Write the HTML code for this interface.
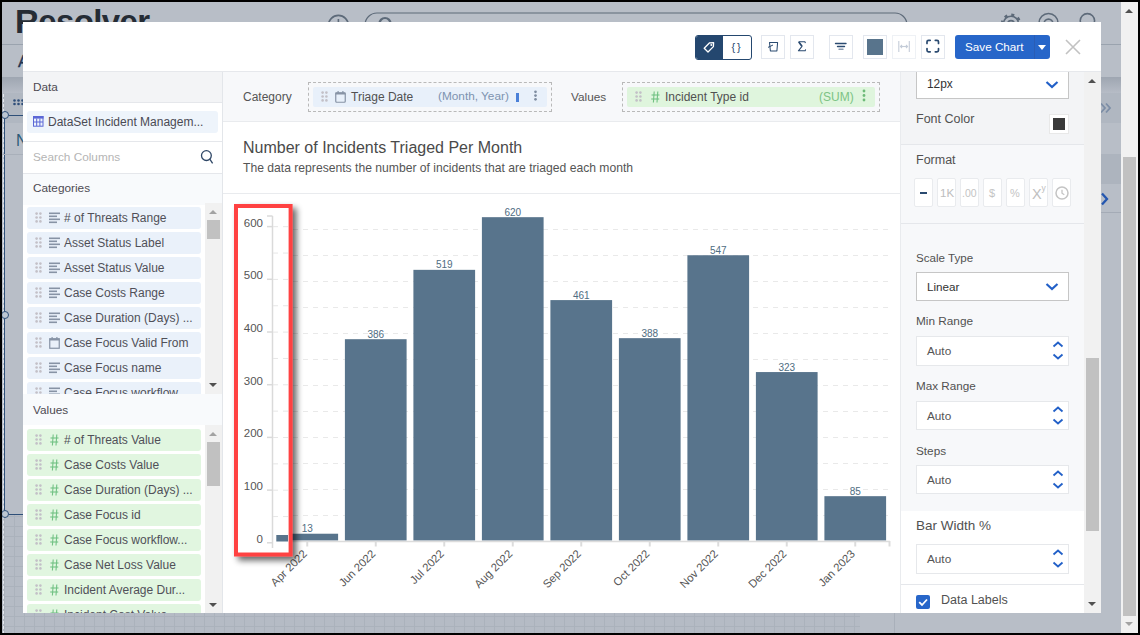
<!DOCTYPE html>
<html><head><meta charset="utf-8">
<style>
*{box-sizing:border-box;margin:0;padding:0}
html,body{width:1140px;height:635px;overflow:hidden;background:#000;font-family:"Liberation Sans",sans-serif;color:#4a4a4a}
body{position:relative}
.a{position:absolute}
.t{position:absolute;white-space:nowrap;line-height:1}
.it{position:absolute;left:27px;width:174px;height:22px;border-radius:3px;background:#eaf1fa}
.it .t{left:37px;top:5px;font-size:12px;color:#505058}
.vi{background:#e1f6e0}
.dots{position:absolute;left:8px;top:6px;width:7px;height:11px;
 background-image:radial-gradient(circle,#c2c2c2 1.3px,transparent 1.5px);background-size:4px 4px;background-position:-0.5px -0.5px}
.sb{position:absolute;background:#f1f1f1}
.thumb{position:absolute;background:#c1c1c1}
.arr-up{position:absolute;width:0;height:0;border-left:4px solid transparent;border-right:4px solid transparent;border-bottom:4px solid #a3a3a3}
.arr-dn{position:absolute;width:0;height:0;border-left:4px solid transparent;border-right:4px solid transparent;border-top:4px solid #505050}
.tb{position:absolute;top:35px;width:24px;height:24px;border:1px solid #e3e7ee;background:#fff}
</style></head><body>
<!-- page background -->
<div class="a" style="left:2px;top:2px;width:1136px;height:631px;background:#b8bec7;overflow:hidden">
 <div class="a" style="left:0;top:512px;width:858px;height:120px;background-color:#b5bbc5;background-image:linear-gradient(to right,#abb2bc 1px,transparent 1px),linear-gradient(to bottom,#abb2bc 1px,transparent 1px);background-size:10px 10px;background-position:2px 2px"></div>
 <div class="a" style="left:892px;top:600px;width:1px;height:32px;background:#a9b0ba"></div>
 <div class="a" style="left:0;top:42px;width:1136px;height:1px;background:#9aa3ae"></div>
 <div class="a" style="left:0;top:75px;width:1136px;height:16px;background:linear-gradient(#9ea6b1,#b6bcc6)"></div>
 <div class="a" style="left:0;top:91px;width:1136px;height:30px;background:#b0b7c1"></div>
 <div class="a" style="left:1099px;top:152px;width:20px;height:30px;background:#adb4be"></div>
 <div class="a" style="left:1099px;top:210px;width:20px;height:1px;background:#a4abb6"></div>
 <div class="t" style="left:13px;top:2.5px;font-size:33px;font-weight:bold;color:#252c35;letter-spacing:-0.6px">Resolver</div>
 <div class="t" style="left:16px;top:51px;font-size:17px;color:#1f3552;-webkit-text-stroke:0.4px #1f3552">A</div>
 <svg class="a" style="left:10px;top:96px" width="14" height="10" viewBox="0 0 14 10"><g fill="#2f4f7a"><circle cx="2.5" cy="2.5" r="1.3"/><circle cx="6.5" cy="2.5" r="1.3"/><circle cx="10.5" cy="2.5" r="1.3"/><circle cx="2.5" cy="6" r="1.3"/><circle cx="6.5" cy="6" r="1.3"/><circle cx="10.5" cy="6" r="1.3"/></g></svg>
 <div class="a" style="left:1px;top:92px;width:0;height:540px;border-left:1px dashed #e6e9ee"></div>
 <div class="a" style="left:1.5px;top:113px;width:1.5px;height:399px;background:#2e4f78"></div>
 <div class="a" style="left:7px;top:112.5px;width:16px;height:1.2px;background:#2e4f78"></div>
 <div class="a" style="left:7px;top:511.5px;width:16px;height:1.2px;background:#2e4f78"></div>
 <div class="a" style="left:-1px;top:109px;width:8px;height:8px;border:1.2px solid #2e4f78;border-radius:50%;background:#bcc6d1"></div>
 <div class="a" style="left:-1px;top:309px;width:8px;height:8px;border:1.2px solid #2e4f78;border-radius:50%;background:#bcc6d1"></div>
 <div class="a" style="left:-1px;top:508px;width:8px;height:8px;border:1.2px solid #2e4f78;border-radius:50%;background:#bcc6d1"></div>
 <div class="t" style="left:14px;top:131px;font-size:16px;color:#2b5a78">N</div>
 <div class="a" style="left:0;top:152px;width:21px;height:1px;background:#a9b0ba"></div>
 <svg class="a" style="left:1097px;top:99px" width="14" height="14" viewBox="0 0 14 14"><path d="M2 2.5 L6 7 L2 11.5 M7 2.5 L11 7 L7 11.5" fill="none" stroke="#7d8ea6" stroke-width="1.8"/></svg>
 <svg class="a" style="left:1097px;top:189px" width="12" height="16" viewBox="0 0 12 16"><path d="M3 2.5 L8 8 L3 13.5" fill="none" stroke="#2457b0" stroke-width="2.3"/></svg>
 <svg class="a" style="left:320px;top:8px" width="800" height="20" viewBox="0 0 800 20"><g fill="none" stroke="#5d6a79" stroke-width="1.6"><circle cx="16.4" cy="15.4" r="10"/><line x1="16.4" y1="9" x2="16.4" y2="16"/><rect x="43" y="3" width="542" height="30" rx="12" stroke-width="1.2"/><circle cx="63" cy="13.5" r="5.5" stroke-width="2.2"/><circle cx="689" cy="13.8" r="7.6"/><circle cx="689" cy="13.8" r="9" stroke-width="2.4" stroke-dasharray="3 4.07"/><circle cx="689" cy="13.8" r="3.2"/><circle cx="726.5" cy="13" r="9.5"/><circle cx="726.5" cy="13.5" r="4.4"/><circle cx="765.4" cy="10.8" r="7.2"/></g><g fill="#5d6a79"><circle cx="553" cy="15.5" r="2.3"/><circle cx="561" cy="15.5" r="2.3"/><circle cx="569" cy="15.5" r="2.3"/></g></svg>
</div>

<!-- page scrollbar -->
<div class="sb" style="left:1121px;top:2px;width:17px;height:631px"></div>
<div class="thumb" style="left:1123px;top:157px;width:13px;height:459px"></div>
<div class="arr-up" style="left:1125px;top:9px;border-bottom-color:#505050"></div>
<div class="arr-dn" style="left:1125px;top:622px;border-top-color:#a3a3a3"></div>

<!-- modal -->
<div class="a" style="left:23px;top:22px;width:1078px;height:591px;background:#fff"></div>
<div class="a" style="left:23px;top:71px;width:1078px;height:1px;background:#e6e8ec"></div>

<!-- HEADER TOOLBAR -->
<div class="a" style="left:695px;top:35px;width:57px;height:25px;border:1.3px solid #24476f;border-radius:3px;background:#fff;overflow:hidden">
 <div class="a" style="left:0;top:0;width:27px;height:25px;background:#24476f"></div>
</div>
<svg class="a" style="left:702px;top:40px" width="14" height="14" viewBox="0 0 14 14"><path d="M2.2 8.2 L7.6 2.8 L11.6 2.6 L11.4 6.6 L6 12 Z" fill="none" stroke="#fff" stroke-width="1.3" stroke-linejoin="round"/><circle cx="9.3" cy="4.9" r="1" fill="#fff"/></svg>
<div class="t" style="left:731.5px;top:42px;font-size:11px;color:#2a4a70;letter-spacing:-0.6px">{ }</div>
<div class="tb" style="left:761px;width:24px"></div>
<svg class="a" style="left:766px;top:40px" width="14" height="14" viewBox="0 0 14 14"><path d="M3.5 2.5 H11.6 L10.9 11 H4.4 Z" fill="none" stroke="#2a4a70" stroke-width="1.05" stroke-linejoin="round"/><path d="M2 7.4 L7 5" stroke="#2a4a70" stroke-width="1"/></svg>
<div class="tb" style="left:790px;width:24px"></div>
<svg class="a" style="left:795px;top:40px" width="14" height="14" viewBox="0 0 14 14"><path d="M3.6 1.8 H10 L10.4 3.2 M3.6 1.8 L7 6.3 L3.4 10.8 H10.2 L10.6 9.4" fill="none" stroke="#2a4a70" stroke-width="1.05" stroke-linejoin="round"/><path d="M3.8 2 L7 6.3" stroke="#2a4a70" stroke-width="1.6"/></svg>
<div class="tb" style="left:829px;width:24px"></div>
<svg class="a" style="left:834px;top:40px" width="14" height="14" viewBox="0 0 14 14"><g stroke-linecap="round" stroke-width="1.4"><line x1="1.5" y1="3.5" x2="12" y2="3.5" stroke="#2a4a70"/><line x1="3.5" y1="6.5" x2="10.5" y2="6.5" stroke="#2a4a70"/><line x1="5" y1="9.3" x2="9" y2="9.3" stroke="#8a9ab0"/></g></svg>
<div class="tb" style="left:863px;width:24px"></div>
<div class="a" style="left:867px;top:39px;width:16px;height:16px;background:#58748c"></div>
<div class="tb" style="left:892px;width:24px;border-color:#eef1f5"></div>
<svg class="a" style="left:897px;top:40px" width="14" height="14" viewBox="0 0 14 14"><g stroke="#c4ccd8" stroke-width="1.1" fill="none"><line x1="1.8" y1="1" x2="1.8" y2="12"/><line x1="12.3" y1="1" x2="12.3" y2="12"/><line x1="3.5" y1="6.5" x2="10.5" y2="6.5"/><path d="M5 5 L3.5 6.5 L5 8 M9 5 L10.5 6.5 L9 8"/></g></svg>
<div class="tb" style="left:921px;width:24px"></div>
<svg class="a" style="left:926px;top:39px" width="14" height="15" viewBox="0 0 14 15"><g stroke="#2a4a70" stroke-width="1.7" fill="none" stroke-linecap="round"><path d="M1 4.5 V2.8 Q1 1.3 2.5 1.3 H4.2"/><path d="M9.3 1.3 H11 Q12.5 1.3 12.5 2.8 V4.5"/><path d="M12.5 9.5 V11.3 Q12.5 12.8 11 12.8 H9.3"/><path d="M4.2 12.8 H2.5 Q1 12.8 1 11.3 V9.5"/></g></svg>
<div class="a" style="left:955px;top:35px;width:95px;height:24px;background:#2766c9;border-radius:3px"></div>
<div class="a" style="left:1034px;top:35px;width:1px;height:24px;background:#2a5db5"></div>
<div class="t" style="left:965px;top:41.3px;font-size:11.7px;color:#fff">Save Chart</div>
<div class="a" style="left:1038px;top:45px;width:0;height:0;border-left:4px solid transparent;border-right:4px solid transparent;border-top:5px solid #fff"></div>
<svg class="a" style="left:1064px;top:38px" width="18" height="18" viewBox="0 0 18 18"><path d="M2 2 L16 16 M16 2 L2 16" stroke="#c2c2c2" stroke-width="1.6"/></svg>
<!-- LEFT PANEL -->
<div id="left">
<div class="a" style="left:23px;top:72px;width:199px;height:31px;background:#f3f4f6;border-bottom:1px solid #e5e7eb"></div>
<div class="t" style="left:33px;top:81.59px;font-size:11.8px;color:#4d4a52">Data</div>
<div class="a" style="left:23px;top:141px;width:199px;height:1px;background:#e5e7eb"></div>
<div class="a" style="left:27px;top:111px;width:191px;height:22px;background:#eef4fb;border-radius:3px"></div>
<div class="t" style="left:48px;top:116px;font-size:12px;color:#4a4a54">DataSet Incident Managem...</div>
<svg class="a" style="left:33px;top:116px" width="11" height="11" viewBox="0 0 11 11"><g fill="none" stroke="#5b67d6" stroke-width="1"><rect x="0.5" y="0.5" width="9.5" height="9.7"/><line x1="0.5" y1="6" x2="10" y2="6"/><line x1="3.7" y1="2.5" x2="3.7" y2="10"/><line x1="6.9" y1="2.5" x2="6.9" y2="10"/></g><rect x="0" y="0" width="10.5" height="2.6" fill="#5b67d6"/></svg>
<svg class="a" style="left:199px;top:148px" width="16" height="17" viewBox="0 0 16 17"><circle cx="7.4" cy="7.6" r="4.9" fill="none" stroke="#2f4766" stroke-width="1.3"/><line x1="10.8" y1="11.2" x2="13.6" y2="15.3" stroke="#2f4766" stroke-width="1.3"/></svg>

<div class="a" style="left:23px;top:173px;width:199px;height:1px;background:#e5e7eb"></div>
<div class="t" style="left:33px;top:151.59px;font-size:11.8px;color:#b5b5b5">Search Columns</div>
<div class="a" style="left:23px;top:174px;width:199px;height:31px;background:#f8fafc"></div>
<div class="t" style="left:33px;top:182.59px;font-size:11.8px;color:#4d4a52">Categories</div>
<div class="a" style="left:23px;top:394px;width:199px;height:31px;background:#f8fafc"></div>
<div class="t" style="left:33px;top:404.59px;font-size:11.8px;color:#4d4a52">Values</div>
<div class="a" style="left:23px;top:205px;width:182px;height:189px;overflow:hidden">
<div class="it" style="left:4px;top:2px"><svg class="a" style="left:8px;top:5px" width="8" height="12" viewBox="0 0 8 12"><g fill="#c3c0c7"><circle cx="1.6" cy="1.6" r="1.3"/><circle cx="5.4" cy="1.6" r="1.3"/><circle cx="1.6" cy="5.5" r="1.3"/><circle cx="5.4" cy="5.5" r="1.3"/><circle cx="1.6" cy="9.4" r="1.3"/><circle cx="5.4" cy="9.4" r="1.3"/></g></svg><svg class="a" style="left:22px;top:5px" width="11" height="12" viewBox="0 0 11 12"><g fill="#8793a5"><rect x="0" y="0.5" width="11" height="1.6"/><rect x="0" y="3.5" width="8" height="1.6"/><rect x="0" y="6.5" width="11" height="1.6"/><rect x="0" y="9.5" width="8" height="1.6"/></g></svg><div class="t"># of Threats Range</div></div>
<div class="it" style="left:4px;top:27px"><svg class="a" style="left:8px;top:5px" width="8" height="12" viewBox="0 0 8 12"><g fill="#c3c0c7"><circle cx="1.6" cy="1.6" r="1.3"/><circle cx="5.4" cy="1.6" r="1.3"/><circle cx="1.6" cy="5.5" r="1.3"/><circle cx="5.4" cy="5.5" r="1.3"/><circle cx="1.6" cy="9.4" r="1.3"/><circle cx="5.4" cy="9.4" r="1.3"/></g></svg><svg class="a" style="left:22px;top:5px" width="11" height="12" viewBox="0 0 11 12"><g fill="#8793a5"><rect x="0" y="0.5" width="11" height="1.6"/><rect x="0" y="3.5" width="8" height="1.6"/><rect x="0" y="6.5" width="11" height="1.6"/><rect x="0" y="9.5" width="8" height="1.6"/></g></svg><div class="t">Asset Status Label</div></div>
<div class="it" style="left:4px;top:52px"><svg class="a" style="left:8px;top:5px" width="8" height="12" viewBox="0 0 8 12"><g fill="#c3c0c7"><circle cx="1.6" cy="1.6" r="1.3"/><circle cx="5.4" cy="1.6" r="1.3"/><circle cx="1.6" cy="5.5" r="1.3"/><circle cx="5.4" cy="5.5" r="1.3"/><circle cx="1.6" cy="9.4" r="1.3"/><circle cx="5.4" cy="9.4" r="1.3"/></g></svg><svg class="a" style="left:22px;top:5px" width="11" height="12" viewBox="0 0 11 12"><g fill="#8793a5"><rect x="0" y="0.5" width="11" height="1.6"/><rect x="0" y="3.5" width="8" height="1.6"/><rect x="0" y="6.5" width="11" height="1.6"/><rect x="0" y="9.5" width="8" height="1.6"/></g></svg><div class="t">Asset Status Value</div></div>
<div class="it" style="left:4px;top:77px"><svg class="a" style="left:8px;top:5px" width="8" height="12" viewBox="0 0 8 12"><g fill="#c3c0c7"><circle cx="1.6" cy="1.6" r="1.3"/><circle cx="5.4" cy="1.6" r="1.3"/><circle cx="1.6" cy="5.5" r="1.3"/><circle cx="5.4" cy="5.5" r="1.3"/><circle cx="1.6" cy="9.4" r="1.3"/><circle cx="5.4" cy="9.4" r="1.3"/></g></svg><svg class="a" style="left:22px;top:5px" width="11" height="12" viewBox="0 0 11 12"><g fill="#8793a5"><rect x="0" y="0.5" width="11" height="1.6"/><rect x="0" y="3.5" width="8" height="1.6"/><rect x="0" y="6.5" width="11" height="1.6"/><rect x="0" y="9.5" width="8" height="1.6"/></g></svg><div class="t">Case Costs Range</div></div>
<div class="it" style="left:4px;top:102px"><svg class="a" style="left:8px;top:5px" width="8" height="12" viewBox="0 0 8 12"><g fill="#c3c0c7"><circle cx="1.6" cy="1.6" r="1.3"/><circle cx="5.4" cy="1.6" r="1.3"/><circle cx="1.6" cy="5.5" r="1.3"/><circle cx="5.4" cy="5.5" r="1.3"/><circle cx="1.6" cy="9.4" r="1.3"/><circle cx="5.4" cy="9.4" r="1.3"/></g></svg><svg class="a" style="left:22px;top:5px" width="11" height="12" viewBox="0 0 11 12"><g fill="#8793a5"><rect x="0" y="0.5" width="11" height="1.6"/><rect x="0" y="3.5" width="8" height="1.6"/><rect x="0" y="6.5" width="11" height="1.6"/><rect x="0" y="9.5" width="8" height="1.6"/></g></svg><div class="t">Case Duration (Days) ...</div></div>
<div class="it" style="left:4px;top:127px"><svg class="a" style="left:8px;top:5px" width="8" height="12" viewBox="0 0 8 12"><g fill="#c3c0c7"><circle cx="1.6" cy="1.6" r="1.3"/><circle cx="5.4" cy="1.6" r="1.3"/><circle cx="1.6" cy="5.5" r="1.3"/><circle cx="5.4" cy="5.5" r="1.3"/><circle cx="1.6" cy="9.4" r="1.3"/><circle cx="5.4" cy="9.4" r="1.3"/></g></svg><svg class="a" style="left:22px;top:5px" width="11" height="12" viewBox="0 0 11 12"><rect x="0.75" y="1.75" width="9.5" height="9.5" fill="none" stroke="#8793a5" stroke-width="1.2"/><rect x="0.5" y="1.5" width="10" height="2" fill="#8793a5"/><rect x="2.5" y="0" width="1.2" height="2.5" fill="#8793a5"/><rect x="7.3" y="0" width="1.2" height="2.5" fill="#8793a5"/></svg><div class="t">Case Focus Valid From</div></div>
<div class="it" style="left:4px;top:152px"><svg class="a" style="left:8px;top:5px" width="8" height="12" viewBox="0 0 8 12"><g fill="#c3c0c7"><circle cx="1.6" cy="1.6" r="1.3"/><circle cx="5.4" cy="1.6" r="1.3"/><circle cx="1.6" cy="5.5" r="1.3"/><circle cx="5.4" cy="5.5" r="1.3"/><circle cx="1.6" cy="9.4" r="1.3"/><circle cx="5.4" cy="9.4" r="1.3"/></g></svg><svg class="a" style="left:22px;top:5px" width="11" height="12" viewBox="0 0 11 12"><g fill="#8793a5"><rect x="0" y="0.5" width="11" height="1.6"/><rect x="0" y="3.5" width="8" height="1.6"/><rect x="0" y="6.5" width="11" height="1.6"/><rect x="0" y="9.5" width="8" height="1.6"/></g></svg><div class="t">Case Focus name</div></div>
<div class="it" style="left:4px;top:177px"><svg class="a" style="left:8px;top:5px" width="8" height="12" viewBox="0 0 8 12"><g fill="#c3c0c7"><circle cx="1.6" cy="1.6" r="1.3"/><circle cx="5.4" cy="1.6" r="1.3"/><circle cx="1.6" cy="5.5" r="1.3"/><circle cx="5.4" cy="5.5" r="1.3"/><circle cx="1.6" cy="9.4" r="1.3"/><circle cx="5.4" cy="9.4" r="1.3"/></g></svg><svg class="a" style="left:22px;top:5px" width="11" height="12" viewBox="0 0 11 12"><g fill="#8793a5"><rect x="0" y="0.5" width="11" height="1.6"/><rect x="0" y="3.5" width="8" height="1.6"/><rect x="0" y="6.5" width="11" height="1.6"/><rect x="0" y="9.5" width="8" height="1.6"/></g></svg><div class="t">Case Focus workflow...</div></div>
</div>
<div class="a" style="left:23px;top:425px;width:182px;height:188px;overflow:hidden">
<div class="it vi" style="left:4px;top:4px"><svg class="a" style="left:8px;top:5px" width="8" height="12" viewBox="0 0 8 12"><g fill="#c3c0c7"><circle cx="1.6" cy="1.6" r="1.3"/><circle cx="5.4" cy="1.6" r="1.3"/><circle cx="1.6" cy="5.5" r="1.3"/><circle cx="5.4" cy="5.5" r="1.3"/><circle cx="1.6" cy="9.4" r="1.3"/><circle cx="5.4" cy="9.4" r="1.3"/></g></svg><svg class="a" style="left:23px;top:5px" width="9" height="12" viewBox="0 0 9 12"><g stroke="#72c283" stroke-width="1.1" fill="none"><line x1="3.2" y1="0.5" x2="2.4" y2="11.5"/><line x1="6.8" y1="0.5" x2="6" y2="11.5"/><line x1="0.5" y1="4" x2="8.5" y2="4"/><line x1="0.2" y1="8" x2="8.2" y2="8"/></g></svg><div class="t"># of Threats Value</div></div>
<div class="it vi" style="left:4px;top:29px"><svg class="a" style="left:8px;top:5px" width="8" height="12" viewBox="0 0 8 12"><g fill="#c3c0c7"><circle cx="1.6" cy="1.6" r="1.3"/><circle cx="5.4" cy="1.6" r="1.3"/><circle cx="1.6" cy="5.5" r="1.3"/><circle cx="5.4" cy="5.5" r="1.3"/><circle cx="1.6" cy="9.4" r="1.3"/><circle cx="5.4" cy="9.4" r="1.3"/></g></svg><svg class="a" style="left:23px;top:5px" width="9" height="12" viewBox="0 0 9 12"><g stroke="#72c283" stroke-width="1.1" fill="none"><line x1="3.2" y1="0.5" x2="2.4" y2="11.5"/><line x1="6.8" y1="0.5" x2="6" y2="11.5"/><line x1="0.5" y1="4" x2="8.5" y2="4"/><line x1="0.2" y1="8" x2="8.2" y2="8"/></g></svg><div class="t">Case Costs Value</div></div>
<div class="it vi" style="left:4px;top:54px"><svg class="a" style="left:8px;top:5px" width="8" height="12" viewBox="0 0 8 12"><g fill="#c3c0c7"><circle cx="1.6" cy="1.6" r="1.3"/><circle cx="5.4" cy="1.6" r="1.3"/><circle cx="1.6" cy="5.5" r="1.3"/><circle cx="5.4" cy="5.5" r="1.3"/><circle cx="1.6" cy="9.4" r="1.3"/><circle cx="5.4" cy="9.4" r="1.3"/></g></svg><svg class="a" style="left:23px;top:5px" width="9" height="12" viewBox="0 0 9 12"><g stroke="#72c283" stroke-width="1.1" fill="none"><line x1="3.2" y1="0.5" x2="2.4" y2="11.5"/><line x1="6.8" y1="0.5" x2="6" y2="11.5"/><line x1="0.5" y1="4" x2="8.5" y2="4"/><line x1="0.2" y1="8" x2="8.2" y2="8"/></g></svg><div class="t">Case Duration (Days) ...</div></div>
<div class="it vi" style="left:4px;top:79px"><svg class="a" style="left:8px;top:5px" width="8" height="12" viewBox="0 0 8 12"><g fill="#c3c0c7"><circle cx="1.6" cy="1.6" r="1.3"/><circle cx="5.4" cy="1.6" r="1.3"/><circle cx="1.6" cy="5.5" r="1.3"/><circle cx="5.4" cy="5.5" r="1.3"/><circle cx="1.6" cy="9.4" r="1.3"/><circle cx="5.4" cy="9.4" r="1.3"/></g></svg><svg class="a" style="left:23px;top:5px" width="9" height="12" viewBox="0 0 9 12"><g stroke="#72c283" stroke-width="1.1" fill="none"><line x1="3.2" y1="0.5" x2="2.4" y2="11.5"/><line x1="6.8" y1="0.5" x2="6" y2="11.5"/><line x1="0.5" y1="4" x2="8.5" y2="4"/><line x1="0.2" y1="8" x2="8.2" y2="8"/></g></svg><div class="t">Case Focus id</div></div>
<div class="it vi" style="left:4px;top:104px"><svg class="a" style="left:8px;top:5px" width="8" height="12" viewBox="0 0 8 12"><g fill="#c3c0c7"><circle cx="1.6" cy="1.6" r="1.3"/><circle cx="5.4" cy="1.6" r="1.3"/><circle cx="1.6" cy="5.5" r="1.3"/><circle cx="5.4" cy="5.5" r="1.3"/><circle cx="1.6" cy="9.4" r="1.3"/><circle cx="5.4" cy="9.4" r="1.3"/></g></svg><svg class="a" style="left:23px;top:5px" width="9" height="12" viewBox="0 0 9 12"><g stroke="#72c283" stroke-width="1.1" fill="none"><line x1="3.2" y1="0.5" x2="2.4" y2="11.5"/><line x1="6.8" y1="0.5" x2="6" y2="11.5"/><line x1="0.5" y1="4" x2="8.5" y2="4"/><line x1="0.2" y1="8" x2="8.2" y2="8"/></g></svg><div class="t">Case Focus workflow...</div></div>
<div class="it vi" style="left:4px;top:129px"><svg class="a" style="left:8px;top:5px" width="8" height="12" viewBox="0 0 8 12"><g fill="#c3c0c7"><circle cx="1.6" cy="1.6" r="1.3"/><circle cx="5.4" cy="1.6" r="1.3"/><circle cx="1.6" cy="5.5" r="1.3"/><circle cx="5.4" cy="5.5" r="1.3"/><circle cx="1.6" cy="9.4" r="1.3"/><circle cx="5.4" cy="9.4" r="1.3"/></g></svg><svg class="a" style="left:23px;top:5px" width="9" height="12" viewBox="0 0 9 12"><g stroke="#72c283" stroke-width="1.1" fill="none"><line x1="3.2" y1="0.5" x2="2.4" y2="11.5"/><line x1="6.8" y1="0.5" x2="6" y2="11.5"/><line x1="0.5" y1="4" x2="8.5" y2="4"/><line x1="0.2" y1="8" x2="8.2" y2="8"/></g></svg><div class="t">Case Net Loss Value</div></div>
<div class="it vi" style="left:4px;top:154px"><svg class="a" style="left:8px;top:5px" width="8" height="12" viewBox="0 0 8 12"><g fill="#c3c0c7"><circle cx="1.6" cy="1.6" r="1.3"/><circle cx="5.4" cy="1.6" r="1.3"/><circle cx="1.6" cy="5.5" r="1.3"/><circle cx="5.4" cy="5.5" r="1.3"/><circle cx="1.6" cy="9.4" r="1.3"/><circle cx="5.4" cy="9.4" r="1.3"/></g></svg><svg class="a" style="left:23px;top:5px" width="9" height="12" viewBox="0 0 9 12"><g stroke="#72c283" stroke-width="1.1" fill="none"><line x1="3.2" y1="0.5" x2="2.4" y2="11.5"/><line x1="6.8" y1="0.5" x2="6" y2="11.5"/><line x1="0.5" y1="4" x2="8.5" y2="4"/><line x1="0.2" y1="8" x2="8.2" y2="8"/></g></svg><div class="t">Incident Average Dur...</div></div>
<div class="it vi" style="left:4px;top:179px"><svg class="a" style="left:8px;top:5px" width="8" height="12" viewBox="0 0 8 12"><g fill="#c3c0c7"><circle cx="1.6" cy="1.6" r="1.3"/><circle cx="5.4" cy="1.6" r="1.3"/><circle cx="1.6" cy="5.5" r="1.3"/><circle cx="5.4" cy="5.5" r="1.3"/><circle cx="1.6" cy="9.4" r="1.3"/><circle cx="5.4" cy="9.4" r="1.3"/></g></svg><svg class="a" style="left:23px;top:5px" width="9" height="12" viewBox="0 0 9 12"><g stroke="#72c283" stroke-width="1.1" fill="none"><line x1="3.2" y1="0.5" x2="2.4" y2="11.5"/><line x1="6.8" y1="0.5" x2="6" y2="11.5"/><line x1="0.5" y1="4" x2="8.5" y2="4"/><line x1="0.2" y1="8" x2="8.2" y2="8"/></g></svg><div class="t">Incident Cost Value</div></div>
</div>
<div class="sb" style="left:205px;top:203px;width:17px;height:191px"></div>
<div class="thumb" style="left:207px;top:220px;width:13px;height:19px"></div>
<div class="arr-up" style="left:209px;top:210px"></div>
<div class="arr-dn" style="left:209px;top:383px"></div>
<div class="sb" style="left:205px;top:425px;width:17px;height:188px"></div>
<div class="thumb" style="left:207px;top:442px;width:13px;height:44px"></div>
<div class="arr-up" style="left:209px;top:432px"></div>
<div class="arr-dn" style="left:209px;top:603px"></div>
<div class="a" style="left:222px;top:72px;width:1px;height:541px;background:#e3e6ea"></div>
</div>

<!-- CENTER -->
<div id="center">
<div class="a" style="left:223px;top:72px;width:677px;height:50px;background:#f7f8fa;border-bottom:1px solid #e9ebee"></div>
<div class="a" style="left:223px;top:193px;width:677px;height:1px;background:#e9ebee"></div>
<div class="t" style="left:243px;top:91.42px;font-size:12px;color:#555">Category</div>
<div class="t" style="left:571px;top:91.59px;font-size:11.8px;color:#555">Values</div>
<div class="t" style="left:243px;top:140px;font-size:16px;color:#4a4a4a">Number of Incidents Triaged Per Month</div>
<div class="t" style="left:243px;top:161.87px;font-size:12.15px;color:#555">The data represents the number of incidents that are triaged each month</div>
</div>


<div class="a" style="left:308px;top:82px;width:244px;height:30px;border:1px dashed #b9b9b9"></div>
<div class="a" style="left:313px;top:87px;width:234px;height:20px;background:#e8f0fa;border-radius:2px"></div>
<svg class="a" style="left:321px;top:91px" width="8" height="12" viewBox="0 0 8 12"><g fill="#c3c0c7"><circle cx="1.6" cy="1.6" r="1.3"/><circle cx="5.4" cy="1.6" r="1.3"/><circle cx="1.6" cy="5.5" r="1.3"/><circle cx="5.4" cy="5.5" r="1.3"/><circle cx="1.6" cy="9.4" r="1.3"/><circle cx="5.4" cy="9.4" r="1.3"/></g></svg>
<svg class="a" style="left:335px;top:91px" width="11" height="12" viewBox="0 0 11 12"><rect x="0.75" y="1.75" width="9.5" height="9.5" fill="none" stroke="#8793a5" stroke-width="1.2" rx="1"/><rect x="0.5" y="1.5" width="10" height="2" fill="#8793a5"/><rect x="2.5" y="0" width="1.2" height="2.5" fill="#8793a5"/><rect x="7.3" y="0" width="1.2" height="2.5" fill="#8793a5"/></svg>
<div class="t" style="left:351px;top:91px;font-size:12px;color:#515151">Triage Date</div>
<div class="t" style="left:438px;top:91.17px;font-size:11.8px;color:#7d93b0">(Month, Year)</div>
<div class="a" style="left:516px;top:93px;width:3.2px;height:9px;background:#4a80d8"></div>
<svg class="a" style="left:533px;top:89px" width="5" height="14" viewBox="0 0 5 14"><g fill="#7e8ca0"><circle cx="2.5" cy="2.8" r="1.35"/><circle cx="2.5" cy="6.6" r="1.35"/><circle cx="2.5" cy="10.3" r="1.35"/></g></svg>

<div class="a" style="left:622px;top:82px;width:258px;height:30px;border:1px dashed #b9b9b9"></div>
<div class="a" style="left:627px;top:87px;width:248px;height:20px;background:#dff5dd;border-radius:2px"></div>
<svg class="a" style="left:635px;top:91px" width="8" height="12" viewBox="0 0 8 12"><g fill="#c3c0c7"><circle cx="1.6" cy="1.6" r="1.3"/><circle cx="5.4" cy="1.6" r="1.3"/><circle cx="1.6" cy="5.5" r="1.3"/><circle cx="5.4" cy="5.5" r="1.3"/><circle cx="1.6" cy="9.4" r="1.3"/><circle cx="5.4" cy="9.4" r="1.3"/></g></svg>
<svg class="a" style="left:651px;top:91px" width="9" height="12" viewBox="0 0 9 12"><g stroke="#72c283" stroke-width="1.1" fill="none"><line x1="3.2" y1="0.5" x2="2.4" y2="11.5"/><line x1="6.8" y1="0.5" x2="6" y2="11.5"/><line x1="0.5" y1="4" x2="8.5" y2="4"/><line x1="0.2" y1="8" x2="8.2" y2="8"/></g></svg>
<div class="t" style="left:665px;top:91px;font-size:12px;color:#515151">Incident Type id</div>
<div class="t" style="left:819px;top:91px;font-size:12px;color:#7cc384">(SUM)</div>
<svg class="a" style="left:862px;top:89px" width="4" height="14" viewBox="0 0 4 14"><g fill="#6dbb78"><circle cx="2" cy="2" r="1.4"/><circle cx="2" cy="6.5" r="1.4"/><circle cx="2" cy="11" r="1.4"/></g></svg>
<!-- CHART -->
<svg class="a" style="left:0;top:0" width="1140" height="635" viewBox="0 0 1140 635" font-family="Liberation Sans, sans-serif">
<g stroke="#e9e9e9" stroke-width="1" stroke-dasharray="5,5"><line x1="273" y1="229.5" x2="889" y2="229.5"/><line x1="273" y1="255.5" x2="889" y2="255.5"/><line x1="273" y1="281.5" x2="889" y2="281.5"/><line x1="273" y1="307.5" x2="889" y2="307.5"/><line x1="273" y1="333.5" x2="889" y2="333.5"/><line x1="273" y1="359.5" x2="889" y2="359.5"/><line x1="273" y1="385.5" x2="889" y2="385.5"/><line x1="273" y1="411.5" x2="889" y2="411.5"/><line x1="273" y1="437.5" x2="889" y2="437.5"/><line x1="273" y1="463.5" x2="889" y2="463.5"/><line x1="273" y1="489.5" x2="889" y2="489.5"/><line x1="273" y1="515.5" x2="889" y2="515.5"/></g>
<g fill="#58748c"><rect x="276.40" y="533.72" width="61.7" height="6.78"/><rect x="344.90" y="339.20" width="61.7" height="201.30"/><rect x="413.40" y="269.84" width="61.7" height="270.66"/><rect x="481.90" y="217.17" width="61.7" height="323.33"/><rect x="550.40" y="300.09" width="61.7" height="240.41"/><rect x="618.90" y="338.16" width="61.7" height="202.34"/><rect x="687.40" y="255.24" width="61.7" height="285.26"/><rect x="755.90" y="372.06" width="61.7" height="168.44"/><rect x="824.40" y="496.17" width="61.7" height="44.33"/></g>
<g fill="#4f6d82" font-size="10" text-anchor="middle"><text x="307.25" y="532.22">13</text><text x="375.75" y="337.70">386</text><text x="444.25" y="268.34">519</text><text x="512.75" y="215.67">620</text><text x="581.25" y="298.59">461</text><text x="649.75" y="336.66">388</text><text x="718.25" y="253.74">547</text><text x="786.75" y="370.56">323</text><text x="855.25" y="494.67">85</text></g>
<line x1="273" y1="541.5" x2="890" y2="541.5" stroke="#dcdcdc" stroke-width="1.5"/>
<g stroke="#dcdcdc" stroke-width="2"><line x1="307.25" y1="541" x2="307.25" y2="546.5"/><line x1="375.75" y1="541" x2="375.75" y2="546.5"/><line x1="444.25" y1="541" x2="444.25" y2="546.5"/><line x1="512.75" y1="541" x2="512.75" y2="546.5"/><line x1="581.25" y1="541" x2="581.25" y2="546.5"/><line x1="649.75" y1="541" x2="649.75" y2="546.5"/><line x1="718.25" y1="541" x2="718.25" y2="546.5"/><line x1="786.75" y1="541" x2="786.75" y2="546.5"/><line x1="855.25" y1="541" x2="855.25" y2="546.5"/><line x1="889.5" y1="541" x2="889.5" y2="546.5"/></g>
<g fill="#555" font-size="11.3" text-anchor="end"><text transform="translate(307.75,554.5) rotate(-45)">Apr 2022</text><text transform="translate(376.25,554.5) rotate(-45)">Jun 2022</text><text transform="translate(444.75,554.5) rotate(-45)">Jul 2022</text><text transform="translate(513.25,554.5) rotate(-45)">Aug 2022</text><text transform="translate(581.75,554.5) rotate(-45)">Sep 2022</text><text transform="translate(650.25,554.5) rotate(-45)">Oct 2022</text><text transform="translate(718.75,554.5) rotate(-45)">Nov 2022</text><text transform="translate(787.25,554.5) rotate(-45)">Dec 2022</text><text transform="translate(855.75,554.5) rotate(-45)">Jan 2023</text></g>
<defs><filter id="sh" x="-30%" y="-5%" width="160%" height="115%"><feGaussianBlur in="SourceAlpha" stdDeviation="3"/><feOffset dx="4" dy="4"/><feComponentTransfer><feFuncA type="linear" slope="0.6"/></feComponentTransfer><feMerge><feMergeNode/><feMergeNode in="SourceGraphic"/></feMerge></filter></defs>
<rect x="236" y="206" width="54.6" height="348.5" fill="#fff" stroke="#ff4343" stroke-width="4" filter="url(#sh)"/>
<line x1="272.5" y1="216" x2="272.5" y2="548" stroke="#dadada" stroke-width="1.5"/>
<g stroke="#e6e6e6" stroke-dasharray="5,5"><line x1="273" y1="226.70" x2="288" y2="226.70"/><line x1="273" y1="253.05" x2="288" y2="253.05"/><line x1="273" y1="279.40" x2="288" y2="279.40"/><line x1="273" y1="305.75" x2="288" y2="305.75"/><line x1="273" y1="332.10" x2="288" y2="332.10"/><line x1="273" y1="358.45" x2="288" y2="358.45"/><line x1="273" y1="384.80" x2="288" y2="384.80"/><line x1="273" y1="411.15" x2="288" y2="411.15"/><line x1="273" y1="437.50" x2="288" y2="437.50"/><line x1="273" y1="463.85" x2="288" y2="463.85"/><line x1="273" y1="490.20" x2="288" y2="490.20"/><line x1="273" y1="516.55" x2="288" y2="516.55"/></g>
<g stroke="#dadada" stroke-width="1.5"><line x1="267" y1="226.60" x2="272.5" y2="226.60"/><line x1="267" y1="279.30" x2="272.5" y2="279.30"/><line x1="267" y1="332.00" x2="272.5" y2="332.00"/><line x1="267" y1="384.70" x2="272.5" y2="384.70"/><line x1="267" y1="437.40" x2="272.5" y2="437.40"/><line x1="267" y1="490.10" x2="272.5" y2="490.10"/><line x1="267" y1="542.80" x2="272.5" y2="542.80"/><line x1="267" y1="216" x2="272.5" y2="216"/></g>
<g fill="#555" font-size="11.5" text-anchor="end"><text x="263" y="226.60">600</text><text x="263" y="279.30">500</text><text x="263" y="332.00">400</text><text x="263" y="384.70">300</text><text x="263" y="437.40">200</text><text x="263" y="490.10">100</text><text x="263" y="542.80">0</text></g>
<rect x="276.3" y="535" width="11.7" height="6.5" fill="#58748c"/>
</svg>
<!-- RIGHT -->
<div id="right">
<div class="a" style="left:900px;top:72px;width:1px;height:541px;background:#e9ebee"></div>

<div class="a" style="left:901px;top:72px;width:183px;height:72px;background:#f3f4f6"></div>
<div class="a" style="left:901px;top:144px;width:183px;height:1px;background:#e5e7eb"></div>
<div class="a" style="left:901px;top:145px;width:183px;height:78px;background:#f7f8fa"></div>
<div class="a" style="left:901px;top:223px;width:183px;height:1px;background:#e5e7eb"></div>
<div class="a" style="left:901px;top:224px;width:183px;height:287px;background:#f7f8fa"></div>
<div class="a" style="left:901px;top:511px;width:183px;height:102px;background:#fff"></div>
<div class="a" style="left:901px;top:584px;width:183px;height:1px;background:#e5e7eb"></div>

<div class="a" style="left:916px;top:72px;width:153px;height:27px;background:#fff;border:1px solid #c6c6c6;border-top:0"></div>
<div class="t" style="left:927px;top:78.51px;font-size:11.9px;color:#333">12px</div>
<svg class="a" style="left:1045px;top:80px" width="14" height="9" viewBox="0 0 14 9"><path d="M1.5 2 L7 7 L12.5 2" fill="none" stroke="#2260c8" stroke-width="2.2"/></svg>
<div class="t" style="left:916px;top:113px;font-size:12.5px;color:#515151">Font Color</div>
<div class="a" style="left:1049px;top:114px;width:20px;height:20px;background:#fff;border:1px solid #e8e8e8"></div>
<div class="a" style="left:1053px;top:118px;width:12px;height:12px;background:#3a3a3a"></div>

<div class="t" style="left:916px;top:154px;font-size:12.5px;color:#515151">Format</div>
<div class="a" style="left:914.0px;top:178px;width:18.5px;height:29px;background:#fff;border:1px solid #e9ebee;border-radius:2px"><div class="a" style="left:5px;top:12.5px;width:6.5px;height:2.8px;background:#2a4a70"></div></div>
<div class="a" style="left:937.0px;top:178px;width:18.5px;height:29px;background:#fff;border:1px solid #e9ebee;border-radius:2px"><div class="t" style="left:2px;top:9px;font-size:11.5px;color:#bdbdbd">1K</div></div>
<div class="a" style="left:960.0px;top:178px;width:18.5px;height:29px;background:#fff;border:1px solid #e9ebee;border-radius:2px"><div class="t" style="left:1px;top:9px;font-size:10.5px;color:#c4c4c4">.00</div></div>
<div class="a" style="left:983.0px;top:178px;width:18.5px;height:29px;background:#fff;border:1px solid #e9ebee;border-radius:2px"><div class="t" style="left:5px;top:9px;font-size:11px;color:#c4c4c4">$</div></div>
<div class="a" style="left:1006.0px;top:178px;width:18.5px;height:29px;background:#fff;border:1px solid #e9ebee;border-radius:2px"><div class="t" style="left:3px;top:9px;font-size:11px;color:#c4c4c4">%</div></div>
<div class="a" style="left:1029.0px;top:178px;width:18.5px;height:29px;background:#fff;border:1px solid #e9ebee;border-radius:2px"><div class="t" style="left:2px;top:8px;font-size:14.5px;color:#c0c0c0">X</div><div class="t" style="left:11.5px;top:5px;font-size:8.5px;color:#c0c0c0">y</div></div>
<div class="a" style="left:1052.0px;top:178px;width:18.5px;height:29px;background:#fff;border:1px solid #e9ebee;border-radius:2px"><svg class="a" style="left:2px;top:7px" width="14" height="14" viewBox="0 0 14 14"><circle cx="7" cy="7" r="6" fill="none" stroke="#c4c4c4" stroke-width="1.5"/><path d="M7 3.8 V7.2 L9.3 8.7" fill="none" stroke="#c4c4c4" stroke-width="1.3"/></svg></div>
<div class="t" style="left:916px;top:251.76px;font-size:11.6px;color:#515151">Scale Type</div>
<div class="a" style="left:916px;top:272px;width:153px;height:29px;background:#fff;border:1px solid #c6c6c6"></div>
<div class="t" style="left:927px;top:280.68px;font-size:11.7px;color:#333">Linear</div>
<svg class="a" style="left:1045px;top:282px" width="14" height="9" viewBox="0 0 14 9"><path d="M1.5 2 L7 7 L12.5 2" fill="none" stroke="#2260c8" stroke-width="2.2"/></svg>
<div class="t" style="left:916px;top:315.59px;font-size:11.8px;color:#515151">Min Range</div>
<div class="a" style="left:916px;top:336px;width:153px;height:30px;background:#fff;border:1px solid #e6e8eb"></div>
<div class="t" style="left:927px;top:344.63px;font-size:11.75px;color:#555">Auto</div>
<svg class="a" style="left:1052px;top:341px" width="12" height="20" viewBox="0 0 12 20"><path d="M1.5 5.5 L6 1.5 L10.5 5.5 M1.5 13.5 L6 17.5 L10.5 13.5" fill="none" stroke="#2260c8" stroke-width="1.8"/></svg>
<div class="t" style="left:916px;top:379.68px;font-size:11.7px;color:#515151">Max Range</div>
<div class="a" style="left:916px;top:401px;width:153px;height:29px;background:#fff;border:1px solid #e6e8eb"></div>
<div class="t" style="left:927px;top:409.63px;font-size:11.75px;color:#555">Auto</div>
<svg class="a" style="left:1052px;top:406px" width="12" height="20" viewBox="0 0 12 20"><path d="M1.5 5.5 L6 1.5 L10.5 5.5 M1.5 13.5 L6 17.5 L10.5 13.5" fill="none" stroke="#2260c8" stroke-width="1.8"/></svg>
<div class="t" style="left:916px;top:444.63px;font-size:11.75px;color:#515151">Steps</div>
<div class="a" style="left:916px;top:465px;width:153px;height:29px;background:#fff;border:1px solid #e6e8eb"></div>
<div class="t" style="left:927px;top:473.63px;font-size:11.75px;color:#555">Auto</div>
<svg class="a" style="left:1052px;top:470px" width="12" height="20" viewBox="0 0 12 20"><path d="M1.5 5.5 L6 1.5 L10.5 5.5 M1.5 13.5 L6 17.5 L10.5 13.5" fill="none" stroke="#2260c8" stroke-width="1.8"/></svg>
<div class="t" style="left:916px;top:519.15px;font-size:13.5px;color:#515151">Bar Width %</div>
<div class="a" style="left:916px;top:544px;width:153px;height:30px;background:#fff;border:1px solid #e6e8eb"></div>
<div class="t" style="left:927px;top:552.63px;font-size:11.75px;color:#555">Auto</div>
<svg class="a" style="left:1052px;top:549px" width="12" height="20" viewBox="0 0 12 20"><path d="M1.5 5.5 L6 1.5 L10.5 5.5 M1.5 13.5 L6 17.5 L10.5 13.5" fill="none" stroke="#2260c8" stroke-width="1.8"/></svg>
<div class="a" style="left:916px;top:595px;width:14px;height:14px;background:#2766c9;border-radius:2px"></div>
<svg class="a" style="left:916px;top:595px" width="14" height="14" viewBox="0 0 14 14"><path d="M3.2 7.2 L6 10 L11 4.5" fill="none" stroke="#fff" stroke-width="1.8"/></svg>
<div class="t" style="left:941px;top:594px;font-size:12.5px;color:#515151">Data Labels</div>
<div class="sb" style="left:1084px;top:72px;width:17px;height:541px"></div>
<div class="thumb" style="left:1086px;top:358px;width:13px;height:173px"></div>
<div class="arr-up" style="left:1088px;top:79px;border-bottom-color:#505050"></div>
<div class="arr-dn" style="left:1088px;top:602px"></div>

</div>
</body></html>
